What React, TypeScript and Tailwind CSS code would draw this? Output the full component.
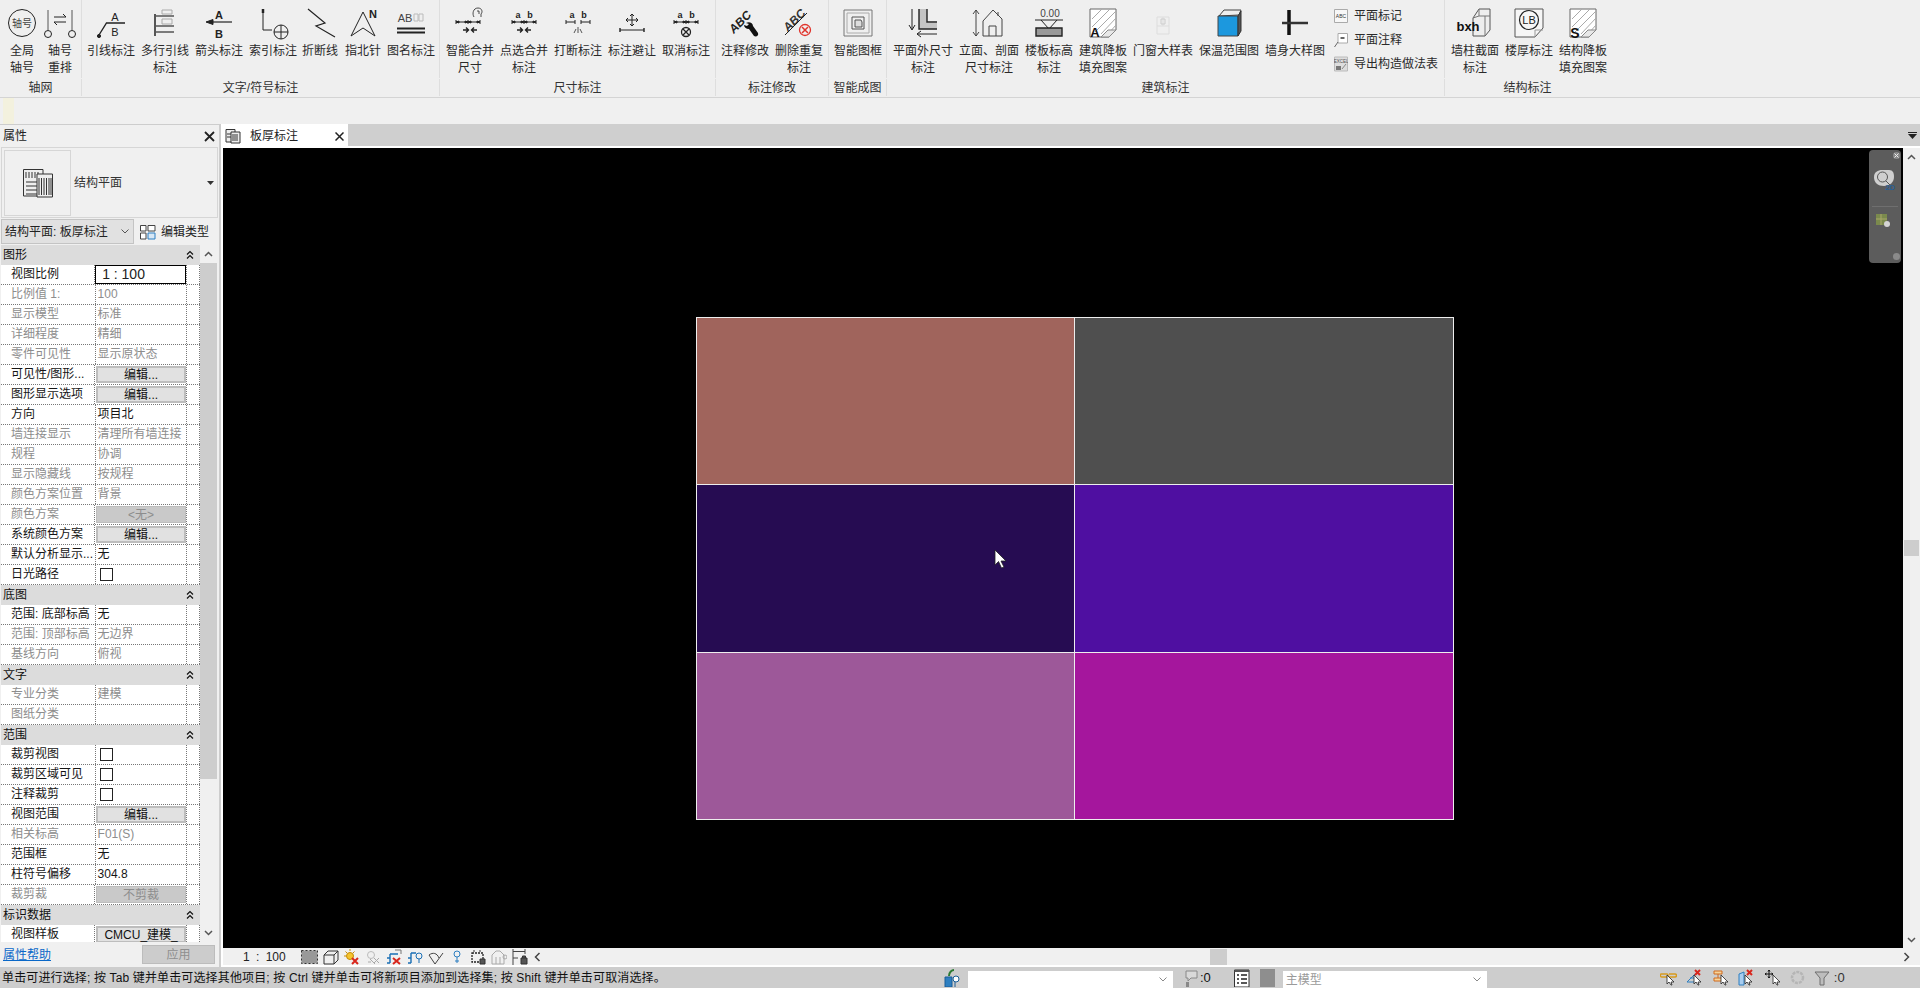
import React from "react";

const I = ({ children }: { children?: React.ReactNode }) => (
  <svg width={40} height={36} viewBox="0 0 40 36" fill="none" stroke="#222" strokeWidth={1}>
    {children}
  </svg>
);
const T = ({ x, y, s = 11, b = false, c = "#222", children, it = false }: any) => (
  <text x={x} y={y} fontSize={s} fontWeight={b ? 700 : 400} fontStyle={it ? "italic" : "normal"} fill={c} stroke="none" textAnchor="middle">
    {children}
  </text>
);
const S = ({ children, w = 16, h = 16 }: any) => (
  <svg width={w} height={h} viewBox={`0 0 ${w} ${h}`} fill="none" stroke="#333" strokeWidth={1} className="shrink-0">
    {children}
  </svg>
);

const Dim = ({ y = 16, x1 = 8, x2 = 32, mid = 20 }: any) => (
  <g>
    <path d={`M${x1} ${y}H${x2}`} />
    <path d={`M${x1} ${y - 2}v4M${mid} ${y - 2}v4M${x2} ${y - 2}v4`} />
    <path d={`M${x1} ${y}l3 -1v2zM${mid} ${y}l-3 -1v2zM${mid} ${y}l3 -1v2zM${x2} ${y}l-3 -1v2z`} fill="#222" />
  </g>
);
const Merge = ({ y = 24 }: any) => (
  <path d={`M13 ${y}h5m-2 -2.5l2.5 2.5l-2.5 2.5M27 ${y}h-5m2 -2.5l-2.5 2.5l2.5 2.5`} strokeWidth={1.4} />
);
const AB = () => (
  <g>
    <T x={14} y={12} s={9} b>a</T>
    <T x={26} y={12} s={9} b>b</T>
  </g>
);

const icons: Record<string, React.ReactNode> = {
  axis: (
    <I>
      <circle cx={20} cy={17} r={13.500} />
      <T x={20} y={21} s={10} c="#444">轴号</T>
    </I>
  ),
  renum: (
    <I>
      <path d="M8 4V24M32 4V24" stroke="#555" />
      <circle cx={8} cy={28} r={3.500} />
      <circle cx={32} cy={28} r={3.500} />
      <path d="M14 11h12l-3 -3M26 16H14l3 3" />
    </I>
  ),
  leader: (
    <I>
      <path d="M8 29L15.500 17H34" strokeWidth={1.4} />
      <circle cx={8} cy={30} r={1.600} fill="#222" />
      <T x={24} y={15} s={11}>A</T>
      <T x={24} y={30} s={11}>B</T>
    </I>
  ),
  multi: (
    <I>
      <path d="M10 8V30" strokeWidth={2} stroke="#555" />
      <path d="M10 10H29M10 20H29M10 26H29" strokeWidth={1.5} stroke="#555" />
      <path d="M17 4H27V8H17zM17 13H27V18H17z" stroke="#aaa" />
    </I>
  ),
  arrow: (
    <I>
      <T x={20} y={13} s={11} b>A</T>
      <T x={20} y={32} s={11} b>B</T>
      <path d="M10 16H33" strokeWidth={1.2} />
      <path d="M7 16l7 -2.500v5z" fill="#222" />
    </I>
  ),
  index: (
    <I>
      <path d="M10 3V24H19" />
      <path d="M10 3v4" strokeWidth={2.5} />
      <circle cx={28} cy={26} r={7} />
      <path d="M21 26H35M28 19V33" />
    </I>
  ),
  brk: (
    <I>
      <path d="M8 3L25 17L16 20L35 31" strokeWidth={1.2} />
    </I>
  ),
  north: (
    <I>
      <path d="M20 6L8 30L20 22L32 30Z" />
      <T x={30} y={12} s={11} b>N</T>
    </I>
  ),
  title: (
    <I>
      <T x={14} y={16} s={11} c="#444">AB</T>
      <path d="M23 8h4v7h-4zM28 8h4v7h-4z" stroke="#bbb" />
      <path d="M6 22.500H34M6 26.500H34" strokeWidth={2} />
    </I>
  ),
  smart: (
    <I>
      <path d="M24 11c-2 -3 -1 -9 4 -9c4 0 5 4 3 6l0 3" strokeWidth={0.8} />
      <path d="M27 5h2v3" strokeWidth={0.8} />
      <Dim x1={6} x2={30} mid={18} />
      <Merge />
    </I>
  ),
  pick: (
    <I>
      <AB />
      <Dim />
      <Merge />
    </I>
  ),
  brkdim: (
    <I>
      <AB />
      <path d="M8 16h9M23 16h9M8 14v4M32 14v4M17 14v4M23 14v4" />
      <path d="M20 21v6M16 27l2 -4M24 27l-2 -4" stroke="#555" />
    </I>
  ),
  avoid: (
    <I>
      <path d="M20 8V20M14 14H26M20 8l-2 2M20 8l2 2M20 20l-2 -2M20 20l2 -2M14 14l2 -2M14 14l2 2M26 14l-2 -2M26 14l-2 2" />
      <path d="M8 24H32" />
      <path d="M8 22v4M32 22v4" strokeWidth={1.4} />
    </I>
  ),
  cancel: (
    <I>
      <AB />
      <Dim />
      <circle cx={20} cy={26} r={4.500} strokeWidth={1.3} />
      <path d="M17 23l6 6M23 23l-6 6" strokeWidth={1.3} />
    </I>
  ),
  fix: (
    <I>
      <g transform="rotate(-45 15 16)">
        <T x={15} y={20} s={12} b it>ABC</T>
      </g>
      <path d="M21 17c3 -2 7 0 7 3l5 7c1 3 -2 4 -4 3l-5 -7c-3 0 -5 -2 -5 -4l3 1l2 -2z" fill="#111" stroke="none" />
    </I>
  ),
  dup: (
    <I>
      <g transform="rotate(-45 16 15)">
        <T x={16} y={18} s={12} b it c="#333">ABC</T>
      </g>
      <path d="M6 29L28 7" />
      <circle cx={26} cy={24} r={5.500} stroke="#e0332b" strokeWidth={1.3} />
      <path d="M23 21l6 6M29 21l-6 6" stroke="#e0332b" strokeWidth={1.5} />
    </I>
  ),
  frame: (
    <I>
      <path d="M6 4H34V30H6z" stroke="#777" />
      <path d="M9 7H31V27H9z" stroke="#aaa" />
      <path d="M14 11H26V23H14z" stroke="#555" />
      <path d="M17 14h6l1 2v5h-7z" fill="#ddd" stroke="#555" />
    </I>
  ),
  outer: (
    <I>
      <path d="M9 3V23M6 19l3 5l3 -5" />
      <path d="M16 3H24V17H34V23H16z" fill="#c4c4c4" stroke="none" />
      <path d="M16 3V23H34M24 3V16H34" strokeWidth={1.4} />
      <path d="M14 28H34M18 25l-4 3l4 3" />
    </I>
  ),
  elev: (
    <I>
      <path d="M7 4V30M4 8l3 -4l3 4M4 26l3 4l3 -4" stroke="#444" />
      <path d="M14 15L24 4L33 13V30H14z" stroke="#444" />
      <path d="M20 30V20H27V30M29 6V10" stroke="#444" />
    </I>
  ),
  level: (
    <I>
      <T x={21} y={11} s={10} c="#444">0.00</T>
      <path d="M6 14H34" />
      <path d="M12 14L20 23L28 14" />
      <path d="M7 22H33V30H7z" fill="#999" strokeWidth={1.4} />
    </I>
  ),
  hatch: (
    <I>
      <path d="M7 3H33V24L26 31H7z" fill="#fff" stroke="#666" />
      <path d="M9 13L19 3M9 21L27 3M12 26L33 5M18 28L33 12M25 28L33 19" stroke="#aaa" />
      <path d="M18 31H26L33 24H25z" fill="#e8e8e8" stroke="#888" />
      <T x={12} y={31} s={13} b c="#111">A</T>
    </I>
  ),
  door: (
    <I>
      <path d="M14 11H26V28H14zM14 20H26M20 11V20" stroke="#ddd" />
      <path d="M18 13h4v5h-4z" stroke="#ccc" />
    </I>
  ),
  warm: (
    <I>
      <path d="M10 10L15 4H32L30 9z" fill="#eee" stroke="#444" />
      <path d="M9 10H29V30H9z" fill="#1c98de" stroke="#444" />
      <path d="M29 10L32 5V25L29 30z" fill="#555" stroke="#333" />
    </I>
  ),
  wall: (
    <I>
      <path d="M14 4V29" strokeWidth={3.500} stroke="#111" />
      <path d="M7 17H33" strokeWidth={2.500} stroke="#333" />
    </I>
  ),
  bxh: (
    <I>
      <path d="M18 12L24 3H35V24L30 30H18z" fill="#eee" stroke="#555" />
      <path d="M24 3V10H35M18 12L24 10M30 10V30" stroke="#777" />
      <T x={13} y={25} s={13} b c="#111">bxh</T>
    </I>
  ),
  lb: (
    <I>
      <path d="M6 3H34V22L26 31H6z" fill="#f6f6f6" stroke="#555" />
      <path d="M26 31V24H34" stroke="#999" />
      <circle cx={20} cy={14} r={9.500} stroke="#222" strokeWidth={1.2} />
      <T x={20} y={18} s={11}>LB</T>
    </I>
  ),
  s: (
    <I>
      <path d="M7 3H33V24L26 31H7z" fill="#fff" stroke="#666" />
      <path d="M9 13L19 3M9 21L27 3M12 26L33 5M18 28L33 12M25 28L33 19" stroke="#aaa" />
      <path d="M18 31H26L33 24H25z" fill="#e8e8e8" stroke="#888" />
      <T x={12} y={32} s={14} b c="#111">S</T>
    </I>
  ),
};

type Item = { w: number; l: string[]; i: string };
type Panel = { w: number; pl: number; label: string; items: Item[]; small?: boolean; last?: boolean };

const panels: Panel[] = [
  { w: 82, pl: 3, label: "轴网", items: [
    { w: 38, l: ["全局", "轴号"], i: "axis" },
    { w: 38, l: ["轴号", "重排"], i: "renum" },
  ] },
  { w: 358, pl: 2, label: "文字/符号标注", items: [
    { w: 54, l: ["引线标注"], i: "leader" },
    { w: 54, l: ["多行引线", "标注"], i: "multi" },
    { w: 54, l: ["箭头标注"], i: "arrow" },
    { w: 54, l: ["索引标注"], i: "index" },
    { w: 40, l: ["折断线"], i: "brk" },
    { w: 46, l: ["指北针"], i: "north" },
    { w: 50, l: ["图名标注"], i: "title" },
  ] },
  { w: 276, pl: 3, label: "尺寸标注", items: [
    { w: 54, l: ["智能合并", "尺寸"], i: "smart" },
    { w: 54, l: ["点选合并", "标注"], i: "pick" },
    { w: 54, l: ["打断标注"], i: "brkdim" },
    { w: 54, l: ["标注避让"], i: "avoid" },
    { w: 54, l: ["取消标注"], i: "cancel" },
  ] },
  { w: 113, pl: 2, label: "标注修改", items: [
    { w: 54, l: ["注释修改"], i: "fix" },
    { w: 54, l: ["删除重复", "标注"], i: "dup" },
  ] },
  { w: 58, pl: 2, label: "智能成图", items: [{ w: 54, l: ["智能图框"], i: "frame" }] },
  { w: 558, pl: 1, label: "建筑标注", small: true, items: [
    { w: 70, l: ["平面外尺寸", "标注"], i: "outer" },
    { w: 62, l: ["立面、剖面", "尺寸标注"], i: "elev" },
    { w: 58, l: ["楼板标高", "标注"], i: "level" },
    { w: 50, l: ["建筑降板", "填充图案"], i: "hatch" },
    { w: 70, l: ["门窗大样表"], i: "door" },
    { w: 62, l: ["保温范围图"], i: "warm" },
    { w: 70, l: ["墙身大样图"], i: "wall" },
  ] },
  { w: 165, pl: 3, label: "结构标注", last: true, items: [
    { w: 54, l: ["墙柱截面", "标注"], i: "bxh" },
    { w: 54, l: ["楼厚标注"], i: "lb" },
    { w: 54, l: ["结构降板", "填充图案"], i: "s" },
  ] },
];

const smallBtns = [
  { t: "平面标记", k: "abc" },
  { t: "平面注释", k: "note" },
  { t: "导出构造做法表", k: "xls" },
];

const SmallIcon = ({ k }: { k: string }) => (
  <S w={14} h={16}>
    {k === "abc" && (
      <g>
        <path d="M0.500 1.500H13.500V14.500H0.500z" fill="#f7f7f7" stroke="#aaa" />
        <text x={7} y={10} fontSize={5} fill="#333" stroke="none" textAnchor="middle">ABC</text>
      </g>
    )}
    {k === "note" && (
      <g>
        <path d="M4 1.500H13.500V11H4z" fill="#fff" stroke="#aaa" />
        <path d="M0.500 15L4 10" stroke="#666" />
        <path d="M6.500 6h4" stroke="#333" strokeWidth={1.5} />
      </g>
    )}
    {k === "xls" && (
      <g>
        <path d="M0.500 1H13.500V15H0.500z" fill="#ddd" stroke="#bbb" />
        <text x={7} y={6.500} fontSize={4.500} fill="#555" stroke="none" textAnchor="middle">EXCEL</text>
        <path d="M2 14V10H7V14z" fill="#777" stroke="none" />
        <path d="M8 13l4 -5" stroke="#888" />
      </g>
    )}
  </S>
);

type Row =
  | { h: string }
  | { l: string; v?: string; k?: "btn" | "dis" | "cb" | "sel"; g?: boolean };

const rows: Row[] = [
  { h: "图形" },
  { l: "视图比例", v: "1 : 100", k: "sel" },
  { l: "比例值 1:", v: "100", g: true },
  { l: "显示模型", v: "标准", g: true },
  { l: "详细程度", v: "精细", g: true },
  { l: "零件可见性", v: "显示原状态", g: true },
  { l: "可见性/图形...", v: "编辑...", k: "btn" },
  { l: "图形显示选项", v: "编辑...", k: "btn" },
  { l: "方向", v: "项目北" },
  { l: "墙连接显示", v: "清理所有墙连接", g: true },
  { l: "规程", v: "协调", g: true },
  { l: "显示隐藏线", v: "按规程", g: true },
  { l: "颜色方案位置", v: "背景", g: true },
  { l: "颜色方案", v: "<无>", k: "dis", g: true },
  { l: "系统颜色方案", v: "编辑...", k: "btn" },
  { l: "默认分析显示...", v: "无" },
  { l: "日光路径", k: "cb" },
  { h: "底图" },
  { l: "范围: 底部标高", v: "无" },
  { l: "范围: 顶部标高", v: "无边界", g: true },
  { l: "基线方向", v: "俯视", g: true },
  { h: "文字" },
  { l: "专业分类", v: "建模", g: true },
  { l: "图纸分类", v: "", g: true },
  { h: "范围" },
  { l: "裁剪视图", k: "cb" },
  { l: "裁剪区域可见", k: "cb" },
  { l: "注释裁剪", k: "cb" },
  { l: "视图范围", v: "编辑...", k: "btn" },
  { l: "相关标高", v: "F01(S)", g: true },
  { l: "范围框", v: "无" },
  { l: "柱符号偏移", v: "304.8" },
  { l: "裁剪裁", v: "不剪裁", k: "dis", g: true },
  { h: "标识数据" },
  { l: "视图样板", v: "CMCU_建模_", k: "btn" },
];

const DoubleUp = () => (
  <svg width={8} height={10} viewBox="0 0 8 10" fill="none" stroke="#111" strokeWidth={1.2}>
    <path d="M1 4.500L4 1.500L7 4.500M1 8.500L4 5.500L7 8.500" />
  </svg>
);

const PropRow = ({ r }: { r: Row }) => {
  if ("h" in r) {
    return (
      <div className="h-5 bg-[#dcdcdc] flex items-center justify-between pl-[2px] pr-[6px] text-[#111] text-xs">
        <span>{r.h}</span>
        <DoubleUp />
      </div>
    );
  }
  const gray = r.g;
  return (
    <div className="h-5 flex text-xs border-b border-dotted border-[#777] bg-white">
      <div className={`w-[94px] pl-[10px] pb-[2px] flex items-center whitespace-nowrap overflow-hidden ${gray ? "text-[#8d8d8d]" : "text-[#151515]"}`}>
        {r.l}
      </div>
      <div className="w-[93px] border-l border-r border-dotted border-[#777] flex items-center">
        {r.k === "sel" && (
          <div className="w-[92px] h-[19px] border border-black flex items-center pl-[6px] pb-[1px] text-[14px] text-[#222]">{r.v}</div>
        )}
        {r.k === "btn" && (
          <div className="ml-[1px] w-[90px] h-[17px] bg-[#e1e1e1] border-2 border-[#bdbdbd] flex items-center justify-center text-[#111] whitespace-nowrap">{r.v}</div>
        )}
        {r.k === "dis" && (
          <div className="ml-[1px] w-[90px] h-[17px] bg-[#c9c9c9] border border-[#bdbdbd] flex items-center justify-center text-[#8d8d8d]">{r.v}</div>
        )}
        {r.k === "cb" && <div className="ml-[4px] w-[13px] h-[13px] bg-white border border-[#222]" />}
        {!r.k && <span className={`pl-[2px] pb-[2px] whitespace-nowrap ${gray ? "text-[#8d8d8d]" : "text-[#151515]"}`}>{r.v}</span>}
      </div>
      <div className="w-[13px] border-r border-dotted border-[#777]" />
    </div>
  );
};

const statusIcons: React.ReactNode[] = [
  <S key="0" w={17} h={14}><path d="M0.500 0.500h16v13h-16z" stroke="#333" fill="#999" strokeDasharray="2 2" /></S>,
  <S key="1"><path d="M1 6H11V15H1zM1 6L5 2H15L11 6M15 2V11L11 15" /></S>,
  <S key="2"><circle cx={6} cy={7} r={3.500} fill="#f4c430" stroke="#c78a00" /><path d="M6 0v2M0 7h2M1.500 2.500l1.500 1.500M10.500 2.500l-1.500 1.500" stroke="#c78a00" /><path d="M8 9l6 6M14 9l-6 6" stroke="#d8261c" strokeWidth={2} /></S>,
  <S key="3"><circle cx={6} cy={6} r={3.500} stroke="#bbb" /><path d="M5 10l5 5M3 13h3M9 9l5 5M14 9l-5 5" stroke="#aaa" /></S>,
  <S key="4"><path d="M4 5H12M4 5V14M1 9H4M1 14H4" stroke="#1a6fb5" strokeWidth={1.4} /><path d="M7 9l7 6M14 9l-7 6" stroke="#d8261c" strokeWidth={2} /><path d="M9 1h6v4" stroke="#777" /></S>,
  <S key="5"><path d="M4 4H9M4 4V14M1 9H4M1 14H4" stroke="#1a6fb5" strokeWidth={1.4} /><circle cx={12} cy={7} r={3} stroke="#1a6fb5" /><path d="M12 10v4" stroke="#1a6fb5" /></S>,
  <S key="6"><path d="M1 6l6 9l8 -11M1 6c4 -3 8 -2 10 3" stroke="#444" /></S>,
  <S key="7"><circle cx={8} cy={5} r={3} stroke="#2d7fc1" /><path d="M8 8v6M6 12h4" stroke="#2d7fc1" /></S>,
  <S key="8"><path d="M2 4H13V13H2z" strokeDasharray="2 1" stroke="#222" strokeWidth={1.3} /><path d="M4 1v2M10 1v2M10 10h5v5h-5z" fill="#555" /></S>,
  <S key="9"><path d="M1 6L5 2H9L13 6V15H1zM5 8v7M9 8v7" stroke="#aaa" /><circle cx={14} cy={8} r={2} stroke="#aaa" /></S>,
  <S key="10"><path d="M1 0v16M13 0v5M1 2.500h12M1 9h5" stroke="#444" /><path d="M9 9h6v6H9zM10.500 9V7h3v2" fill="#555" /></S>,
];

const Bg = ({ w, h, children }: any) => <S w={w} h={h}>{children}</S>;

const Pointer = ({ x = 7 }: { x?: number }) => (
  <path d={`M${x} 6l0 9l2 -2l2 3h1l-1 -3l3 0z`} fill="#fff" stroke="#222" strokeWidth={0.8} />
);

export default function App() {
  return (
    <div className="w-[1920px] h-[988px] flex flex-col overflow-hidden bg-[#f0f0f0] font-['Liberation_Sans','Noto_Sans_CJK_SC',sans-serif] text-xs text-[#222]">
      {/* Ribbon */}
      <div className="h-[98px] shrink-0 flex bg-[#efefef] border-b border-[#d4d4d4]">
        {panels.map((p) => (
          <div key={p.label} className="flex flex-col h-[97px] pb-[1px]" style={{ width: p.w }}>
            <div className={`flex-1 flex pt-[2px] mb-[1px] ${p.last ? "" : "border-r border-[#dedede]"}`} style={{ paddingLeft: p.pl }}>
              {p.items.map((it) => (
                <div key={it.l[0]} className="flex flex-col items-center shrink-0 pt-[4px]" style={{ width: it.w }}>
                  <div className="h-[36px] w-[40px] flex justify-center shrink-0">{icons[it.i]}</div>
                  <div className="text-center leading-[17px] whitespace-nowrap mt-[1px] text-[#2a2a2a]">
                    {it.l.map((x) => (
                      <div key={x}>{x}</div>
                    ))}
                  </div>
                </div>
              ))}
              {p.small && (
                <div className="flex flex-col pl-[4px] pt-[6px] gap-[8px] leading-[16px]">
                  {smallBtns.map((b) => (
                    <div key={b.t} className="flex items-center gap-[6px] whitespace-nowrap h-[16px] text-[#2a2a2a]">
                      <SmallIcon k={b.k} />
                      {b.t}
                    </div>
                  ))}
                </div>
              )}
            </div>
            <div className={`h-[17px] shrink-0 text-center leading-[18px] text-[#333] ${p.last ? "" : "border-r border-[#dedede]"}`}>{p.label}</div>
          </div>
        ))}
      </div>

      {/* Options bar */}
      <div className="h-[26px] shrink-0 bg-[#f0f0f0] flex pl-[3px]">
        <div className="w-[11px] h-full bg-[#f3f1de]" />
      </div>

      {/* Main */}
      <div className="flex-1 flex min-h-0">
        {/* Properties */}
        <div className="w-[219px] shrink-0 flex flex-col bg-[#f0f0f0] border-t border-[#cdcdcd]">
          <div className="h-[22px] shrink-0 flex items-center justify-between pl-[3px] pr-[4px] text-[#222]">
            <span>属性</span>
            <svg width={11} height={11} viewBox="0 0 11 11" stroke="#222" strokeWidth={1.800}>
              <path d="M1 1L10 10M10 1L1 10" />
            </svg>
          </div>
          <div className="mx-[1px] h-[71px] shrink-0 border border-[#d6d6d6] flex items-center pl-[2px] pr-[3px]">
            <div className="w-[67px] h-[66px] border border-[#d6d6d6] flex items-center justify-center">
              <svg width={30} height={30} viewBox="0 0 30 30" fill="#fff" stroke="#333">
                <path d="M0.500 1.500H20V28H0.500z" fill="#eee" />
                <path d="M3 4v6M6 4v6M9 4v6M12 4v6M15 4v6M3 14H14M3 18H14M3 22H14M3 26H14" />
                <path d="M14 6H29.500V29H14z" fill="#eee" />
                <path d="M16 10V27M18.500 10V27M21 10V27M23.500 10V27M26 10V27M28 10V27" />
              </svg>
            </div>
            <span className="ml-[3px] text-[#333]">结构平面</span>
            <svg width={7} height={4} viewBox="0 0 7 4" className="ml-auto" fill="#333">
              <path d="M0 0H7L3.500 4z" />
            </svg>
          </div>
          <div className="h-[27px] shrink-0 flex items-center pl-[1px]">
            <div className="w-[133px] h-[25px] bg-[#e1e1e1] border border-[#c4c4c4] flex items-center justify-between pl-[3px] pr-[4px] text-[#222] whitespace-nowrap">
              <span>结构平面: 板厚标注</span>
              <svg width={8} height={5} viewBox="0 0 8 5" fill="none" stroke="#555">
                <path d="M0.500 0.500L4 4L7.500 0.500" />
              </svg>
            </div>
            <svg width={16} height={16} viewBox="0 0 16 16" fill="#fff" stroke="#444" className="ml-[6px]">
              <path d="M0.500 1.500H6V7H0.500zM0.500 9H6V15H0.500zM8 1.500H15V7H8z" />
              <path d="M8 9H15V15H8z" fill="#d7e7f5" stroke="#2d7fc1" />
            </svg>
            <span className="ml-[5px] text-[#222]">编辑类型</span>
          </div>
          <div className="flex-1 min-h-0 flex overflow-hidden">
            <div className="w-[200px] pl-[1px] shrink-0 overflow-hidden">
              {rows.map((r, i) => (
                <PropRow key={i} r={r} />
              ))}
            </div>
            <div className="w-[17px] shrink-0 flex flex-col bg-[#f0f0f0]">
              <div className="h-[18px] flex items-center justify-center">
                <svg width={9} height={6} viewBox="0 0 9 6" fill="none" stroke="#555" strokeWidth={1.500}><path d="M1 5L4.500 1.500L8 5" /></svg>
              </div>
              <div className="h-[516px] bg-[#cdcdcd]" />
              <div className="flex-1" />
              <div className="h-[18px] flex items-center justify-center">
                <svg width={9} height={6} viewBox="0 0 9 6" fill="none" stroke="#555" strokeWidth={1.500}><path d="M1 1L4.500 4.500L8 1" /></svg>
              </div>
            </div>
          </div>
          <div className="h-[25px] shrink-0 flex items-center justify-between pl-[3px] pr-[4px]">
            <span className="text-[#0a68c8] underline">属性帮助</span>
            <div className="w-[73px] h-[19px] bg-[#cccccc] border border-[#bcbcbc] flex items-center justify-center text-[#8f8f8f]">应用</div>
          </div>
        </div>
        <div className="w-[2px] shrink-0 bg-[#cdcdcd]" />
        <div className="w-[2px] shrink-0 bg-white" />

        {/* Right */}
        <div className="flex-1 flex flex-col min-w-0">
          <div className="h-[22px] shrink-0 bg-[#cfcfcf] flex items-stretch justify-between">
            <div className="w-[125px] bg-white flex items-center pl-[2px] -mb-[2px]">
              <svg width={16} height={16} viewBox="0 0 16 16" fill="#fff" stroke="#333">
                <path d="M1 1.500H10V14H1z" fill="#eee" />
                <path d="M6 4H15V15H6z" fill="#eee" />
                <path d="M8 6V13M10 6V13M12 6V13M2 6H6M2 9H6" />
              </svg>
              <span className="ml-[9px] text-[#222]">板厚标注</span>
              <svg width={9} height={9} viewBox="0 0 9 9" stroke="#222" strokeWidth={1.500} className="ml-auto mr-[4px]"><path d="M0.500 0.500L8.500 8.500M8.500 0.500L0.500 8.500" /></svg>
            </div>
            <div className="flex flex-col items-center justify-center pr-[3px] gap-[1px]">
              <div className="w-[9px] h-[1px] bg-[#222]" />
              <svg width={9} height={5} viewBox="0 0 9 5" fill="#222"><path d="M0 0H9L4.500 5z" /></svg>
            </div>
          </div>
          <div className="h-[2px] shrink-0 bg-white" />
          <div className="flex-1 min-h-0 flex">
            <div className="flex-1 relative bg-black overflow-hidden">
              <div className="ml-[473px] mt-[169px] w-[758px] h-[503px] grid grid-cols-[377px_378px] grid-rows-3 gap-px bg-[#eeeeee] border border-[#eeeeee]">
                <div className="bg-[#a0645c]" />
                <div className="bg-[#4f4f4f]" />
                <div className="bg-[#260c52]" />
                <div className="bg-[#4f0fa1]" />
                <div className="bg-[#9d5899]" />
                <div className="bg-[#a5169d]" />
              </div>
              {/* Cursor */}
              <svg width={14} height={20} viewBox="0 0 14 20" className="absolute left-[771px] top-[401px]">
                <path d="M1 1V16L4.500 12.500L7.500 19L10 18L7 12H12z" fill="#fff" stroke="#222" strokeWidth={0.800} />
              </svg>
              {/* Navigation bar */}
              <div className="absolute left-[1646px] top-[2px] w-[32px] h-[113px] rounded-[4px] bg-[#5c5c5c] flex flex-col items-center">
                <div className="self-end mr-[1px] mt-[2px] w-[7px] h-[7px] rounded-full bg-[#8a8a8a] flex items-center justify-center">
                  <svg width={5} height={5} viewBox="0 0 5 5" stroke="#eee"><path d="M0.500 0.500L4.500 4.500M4.500 0.500L0.500 4.500" /></svg>
                </div>
                <svg width={24} height={24} viewBox="0 0 24 24" className="mt-[9px]" fill="none">
                  <path d="M1 9C1 4 5 2 9 2H16C20 2 21 5 21 9C21 14 17 18 11 18C5 18 1 15 1 9Z" fill="#cfcfcf" />
                  <circle cx={9.500} cy={9} r={5} stroke="#555" />
                  <path d="M13 13l4 4" stroke="#555" />
                  <text x={17} y={22} fontSize={8} fontWeight={700} fill="#2a5f96" textAnchor="middle">2D</text>
                </svg>
                <div className="w-[26px] h-[1px] bg-[#6f6f6f] mt-[14px]" />
                <svg width={18} height={18} viewBox="0 0 18 18" className="mt-[6px] -ml-[2px]">
                  <path d="M1 1H12V12H1z" fill="#7b8a4d" />
                  <path d="M1 6H12M6 1V12" stroke="#a9a86a" />
                  <circle cx={12} cy={11} r={3} fill="#d4d4d4" />
                </svg>
                <div className="mt-auto mb-[3px] self-end mr-[1px] w-[7px] h-[7px] rounded-full bg-[#8a8a8a]" />
              </div>
            </div>
            <div className="w-[17px] shrink-0 bg-[#f0f0f0] flex flex-col items-center relative">
              <div className="h-[17px] flex items-center justify-center">
                <svg width={9} height={6} viewBox="0 0 9 6" fill="none" stroke="#555" strokeWidth={1.500}><path d="M1 5L4.500 1.500L8 5" /></svg>
              </div>
              <div className="mt-[375px] w-[15px] h-[16px] bg-[#cdcdcd]" />
              <div className="mt-auto h-[17px] flex items-center justify-center">
                <svg width={9} height={6} viewBox="0 0 9 6" fill="none" stroke="#555" strokeWidth={1.500}><path d="M1 1L4.500 4.500L8 1" /></svg>
              </div>
            </div>
          </div>
          {/* View control bar */}
          <div className="h-[17px] shrink-0 bg-[#f0f0f0] flex items-center">
            <span className="ml-[20px] w-[58px] text-[#222] whitespace-pre [word-spacing:3px]">1 : 100</span>
            <div className="flex items-center gap-[5px]">{statusIcons}</div>
            <svg width={7} height={10} viewBox="0 0 7 10" fill="none" stroke="#444" strokeWidth={1.500} className="ml-[6px]"><path d="M5.500 1L1.500 5L5.500 9" /></svg>
            <div className="ml-[669px] w-[17px] h-[16px] bg-[#cdcdcd]" />
            <svg width={7} height={10} viewBox="0 0 7 10" fill="none" stroke="#444" strokeWidth={1.500} className="ml-auto mr-[10px]"><path d="M1.500 1L5.500 5L1.500 9" /></svg>
          </div>
          <div className="h-[2px] shrink-0 bg-white" />
        </div>
      </div>

      {/* Status bar */}
      <div className="h-[21px] shrink-0 bg-[#cdcdcd] flex items-center text-[#111] whitespace-nowrap overflow-hidden">
        <span className="w-[944px] pl-[2px] shrink-0 tracking-[0.14px]">单击可进行选择; 按 Tab 键并单击可选择其他项目; 按 Ctrl 键并单击可将新项目添加到选择集; 按 Shift 键并单击可取消选择。</span>
        <Bg w={16} h={18}>
          <path d="M1 8H8V18H1z" fill="#2d7fc1" stroke="#1a5d96" />
          <circle cx={12} cy={10} r={3} stroke="#1a5d96" fill="#fff" />
          <path d="M11 13V18" stroke="#1a5d96" />
          <path d="M5 7c0 -4 3 -6 5 -6" stroke="#2b7a32" strokeWidth={2} />
        </Bg>
        <div className="ml-[8px] w-[205px] h-[17px] mt-[4px] bg-white flex items-center justify-end pr-[6px] shrink-0">
          <svg width={8} height={5} viewBox="0 0 8 5" fill="none" stroke="#888"><path d="M0.500 0.500L4 4L7.500 0.500" /></svg>
        </div>
        <div className="ml-[10px] shrink-0">
          <Bg w={16} h={18}>
            <path d="M3 2H14V9H8L5 12V9H3z" fill="#d9d9d9" stroke="#888" />
            <path d="M3 18V13H6V18z" fill="#888" stroke="none" />
          </Bg>
        </div>
        <span className="ml-[1px] text-[13px]">:0</span>
        <div className="ml-[23px] shrink-0">
          <Bg w={16} h={18}>
            <path d="M0.500 1H15V18H0.500z" fill="#fff" stroke="#333" />
            <path d="M0.500 1H15V3H0.500z" fill="#555" stroke="none" />
            <path d="M3 6h2M7 6h6M3 10h2M7 10h6M3 14h2M7 14h6" stroke="#222" strokeWidth={1.300} />
          </Bg>
        </div>
        <div className="ml-[10px] shrink-0 w-[15px] h-[18px] bg-[#8e8e8e]" />
        <div className="ml-[8px] w-[204px] h-[17px] mt-[4px] bg-white flex items-center justify-between pl-[3px] pr-[6px] shrink-0 text-[#9a9a9a]">
          <span>主模型</span>
          <svg width={8} height={5} viewBox="0 0 8 5" fill="none" stroke="#888"><path d="M0.500 0.500L4 4L7.500 0.500" /></svg>
        </div>
        <div className="ml-[173px] flex items-center shrink-0 gap-[9px]">
          <Bg w={17} h={17}><path d="M1 5h6c1 0 2 3 0 3H2c-2 0 -2 -3 -1 -3zM9 5h6c2 0 2 3 0 3h-6" stroke="#d79a1e" strokeWidth={1.500} /><Pointer /></Bg>
          <Bg w={17} h={17}><path d="M1 13L9 5M1 13H9M4 9H10" stroke="#2d7fc1" /><path d="M9 1l5 5M14 1l-5 5" stroke="#d8261c" strokeWidth={2} /><Pointer x={8} /></Bg>
          <Bg w={17} h={17}><path d="M2 2H10V5H2zM2 9H10V12H2z" fill="#f6d49a" stroke="#d06a1e" /><path d="M6 5v4" stroke="#d06a1e" /><Pointer x={9} /></Bg>
          <Bg w={17} h={17}><path d="M1 5L6 3V16H1z" fill="#a9cdef" stroke="#2d7fc1" /><path d="M9 1l5 5M14 1l-5 5" stroke="#d8261c" strokeWidth={2} /><Pointer x={7} /></Bg>
          <Bg w={17} h={17}><path d="M5 1V9M1 5H9M5 1l-1 1.500M5 1l1 1.500M5 9l-1 -1.500M5 9l1 -1.500M1 5l1.500 -1M1 5l1.500 1M9 5l-1.500 -1M9 5l-1.500 1" stroke="#111" /><Pointer x={9} /></Bg>
          <Bg w={15} h={15}><circle cx={7.500} cy={7.500} r={5.500} stroke="#b5b5b5" strokeWidth={2.500} strokeDasharray="3 1" /></Bg>
          <Bg w={16} h={16}><path d="M1 2H15L10 8V15H6V8Z" fill="#bdbdbd" stroke="#6e6e6e" /></Bg>
        </div>
        <span className="ml-[4px] text-[13px] text-[#333]">:0</span>
      </div>
    </div>
  );
}
